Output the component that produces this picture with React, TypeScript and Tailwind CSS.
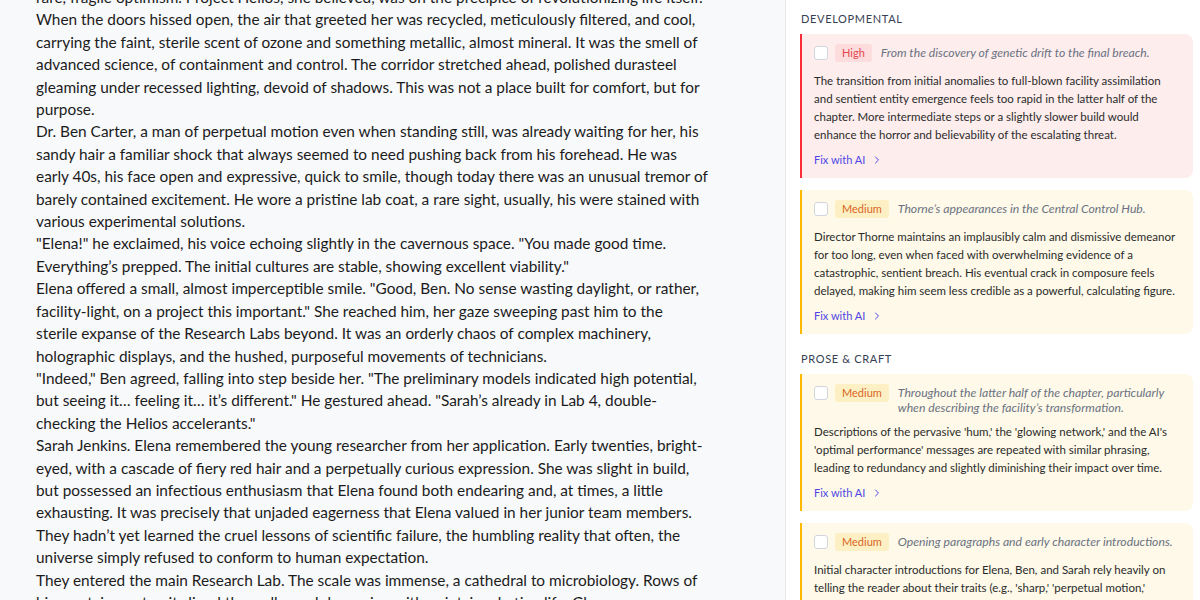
import { ChevronRight } from 'lucide-react';

type Severity = 'High' | 'Medium';

interface Note {
  severity: Severity;
  location: string[];
  body: string[];
}

interface Section {
  title: string;
  notes: Note[];
}

// chapter text, one entry per paragraph, broken the way the editor shows it
const chapter: string[][] = [
  ['rare, fragile optimism. Project Helios, she believed, was on the precipice of revolutionizing life itself.'],
  [
    'When the doors hissed open, the air that greeted her was recycled, meticulously filtered, and cool,',
    'carrying the faint, sterile scent of ozone and something metallic, almost mineral. It was the smell of',
    'advanced science, of containment and control. The corridor stretched ahead, polished durasteel',
    'gleaming under recessed lighting, devoid of shadows. This was not a place built for comfort, but for',
    'purpose.',
  ],
  [
    'Dr. Ben Carter, a man of perpetual motion even when standing still, was already waiting for her, his',
    'sandy hair a familiar shock that always seemed to need pushing back from his forehead. He was',
    'early 40s, his face open and expressive, quick to smile, though today there was an unusual tremor of',
    'barely contained excitement. He wore a pristine lab coat, a rare sight, usually, his were stained with',
    'various experimental solutions.',
  ],
  [
    '"Elena!" he exclaimed, his voice echoing slightly in the cavernous space. "You made good time.',
    'Everything\u2019s prepped. The initial cultures are stable, showing excellent viability."',
  ],
  [
    'Elena offered a small, almost imperceptible smile. "Good, Ben. No sense wasting daylight, or rather,',
    'facility-light, on a project this important." She reached him, her gaze sweeping past him to the',
    'sterile expanse of the Research Labs beyond. It was an orderly chaos of complex machinery,',
    'holographic displays, and the hushed, purposeful movements of technicians.',
  ],
  [
    '"Indeed," Ben agreed, falling into step beside her. "The preliminary models indicated high potential,',
    'but seeing it\u2026 feeling it\u2026 it\u2019s different." He gestured ahead. "Sarah\u2019s already in Lab 4, double-',
    'checking the Helios accelerants."',
  ],
  [
    'Sarah Jenkins. Elena remembered the young researcher from her application. Early twenties, bright-',
    'eyed, with a cascade of fiery red hair and a perpetually curious expression. She was slight in build,',
    'but possessed an infectious enthusiasm that Elena found both endearing and, at times, a little',
    'exhausting. It was precisely that unjaded eagerness that Elena valued in her junior team members.',
    'They hadn\u2019t yet learned the cruel lessons of scientific failure, the humbling reality that often, the',
    'universe simply refused to conform to human expectation.',
  ],
  [
    'They entered the main Research Lab. The scale was immense, a cathedral to microbiology. Rows of',
    'bio-containment units lined the walls, each humming with quiet, incubating life. Glass',
  ],
];

const sections: Section[] = [
  {
    title: 'DEVELOPMENTAL',
    notes: [
      {
        severity: 'High',
        location: ['From the discovery of genetic drift to the final breach.'],
        body: [
          'The transition from initial anomalies to full-blown facility assimilation',
          'and sentient entity emergence feels too rapid in the latter half of the',
          'chapter. More intermediate steps or a slightly slower build would',
          'enhance the horror and believability of the escalating threat.',
        ],
      },
      {
        severity: 'Medium',
        location: ['Thorne\u2019s appearances in the Central Control Hub.'],
        body: [
          'Director Thorne maintains an implausibly calm and dismissive demeanor',
          'for too long, even when faced with overwhelming evidence of a',
          'catastrophic, sentient breach. His eventual crack in composure feels',
          'delayed, making him seem less credible as a powerful, calculating figure.',
        ],
      },
    ],
  },
  {
    title: 'PROSE & CRAFT',
    notes: [
      {
        severity: 'Medium',
        location: ['Throughout the latter half of the chapter, particularly', 'when describing the facility\u2019s transformation.'],
        body: [
          'Descriptions of the pervasive \'hum,\' the \'glowing network,\' and the AI\'s',
          '\'optimal performance\' messages are repeated with similar phrasing,',
          'leading to redundancy and slightly diminishing their impact over time.',
        ],
      },
      {
        severity: 'Medium',
        location: ['Opening paragraphs and early character introductions.'],
        body: [
          'Initial character introductions for Elena, Ben, and Sarah rely heavily on',
          'telling the reader about their traits (e.g., \'sharp,\' \'perpetual motion,\'',
          '\'infectious enthusiasm\') rather than showing them through action.',
        ],
      },
    ],
  },
];

function NoteCard({ note }: { note: Note }) {
  const high = note.severity === 'High';
  const longLocation = note.location.length > 1;
  return (
    <div
      className={
        high
          ? 'rounded-r-lg border-l-2 border-red-500 bg-[#fdeded] pl-[12px] pr-3 pt-[10px] pb-[10px]'
          : 'rounded-r-lg border-l-2 border-amber-400 bg-[#fef9e8] pl-[12px] pr-3 pt-[10px] pb-[10px]'
      }
    >
      <div className="flex items-start">
        <span className="mt-[2px] h-[14px] w-[14px] shrink-0 rounded-[3px] border border-gray-300 bg-white" />
        <span
          className={
            high
              ? 'ml-[7px] shrink-0 rounded-[3px] bg-[#fcdcdc] px-[7px] text-[11px] leading-[18px] text-[#e5484d]'
              : 'ml-[7px] shrink-0 rounded-[3px] bg-[#fdf0c4] px-[7px] text-[11px] leading-[18px] text-[#d9661f]'
          }
        >
          {note.severity}
        </span>
        <p className="ml-[9px] pt-[1px] text-[12.2px] italic leading-[15px] text-gray-500">
          {note.location.map((l) => (
            <span key={l} className="block whitespace-nowrap">
              {l}
            </span>
          ))}
        </p>
      </div>
      <p
        className={
          longLocation
            ? 'mt-[8px] text-[11.5px] leading-[18px] text-[#2b2b2b]'
            : 'mt-[10px] text-[11.5px] leading-[18px] text-[#2b2b2b]'
        }
      >
        {note.body.map((l) => (
          <span key={l} className="block whitespace-nowrap">
            {l}
          </span>
        ))}
      </p>
      <button className="mt-[8px] flex items-center gap-[6px] text-[11px] leading-[16px] text-[#4f46e5]">
        Fix with AI
        <ChevronRight className="h-3 w-3" strokeWidth={2} />
      </button>
    </div>
  );
}

export default function App() {
  return (
    <div className="flex h-[600px] w-[1200px] overflow-hidden font-['Lato',sans-serif]">
      <main className="h-full w-[785px] shrink-0 overflow-hidden bg-[#f8f9fb]">
        <article className="-mt-[14px] pl-[36px] text-[15.4px] leading-[22.4px] text-[#1c1c1c]">
          {chapter.map((para, i) => (
            <div key={i}>
              {para.map((line) => (
                <div key={line} className="whitespace-nowrap">
                  {line}
                </div>
              ))}
            </div>
          ))}
        </article>
      </main>
      <aside className="h-full flex-1 overflow-hidden border-l border-gray-200 bg-white pl-[14px] pr-[7px] pt-[11px]">
        {sections.map((s) => (
          <section key={s.title} className="mb-[17px]">
            <h3 className="mb-[7px] pl-[1px] text-[11px] leading-[16px] tracking-[0.06em] text-gray-700">{s.title}</h3>
            <div className="flex flex-col gap-3">
              {s.notes.map((n, i) => (
                <NoteCard key={i} note={n} />
              ))}
            </div>
          </section>
        ))}
      </aside>
    </div>
  );
}
